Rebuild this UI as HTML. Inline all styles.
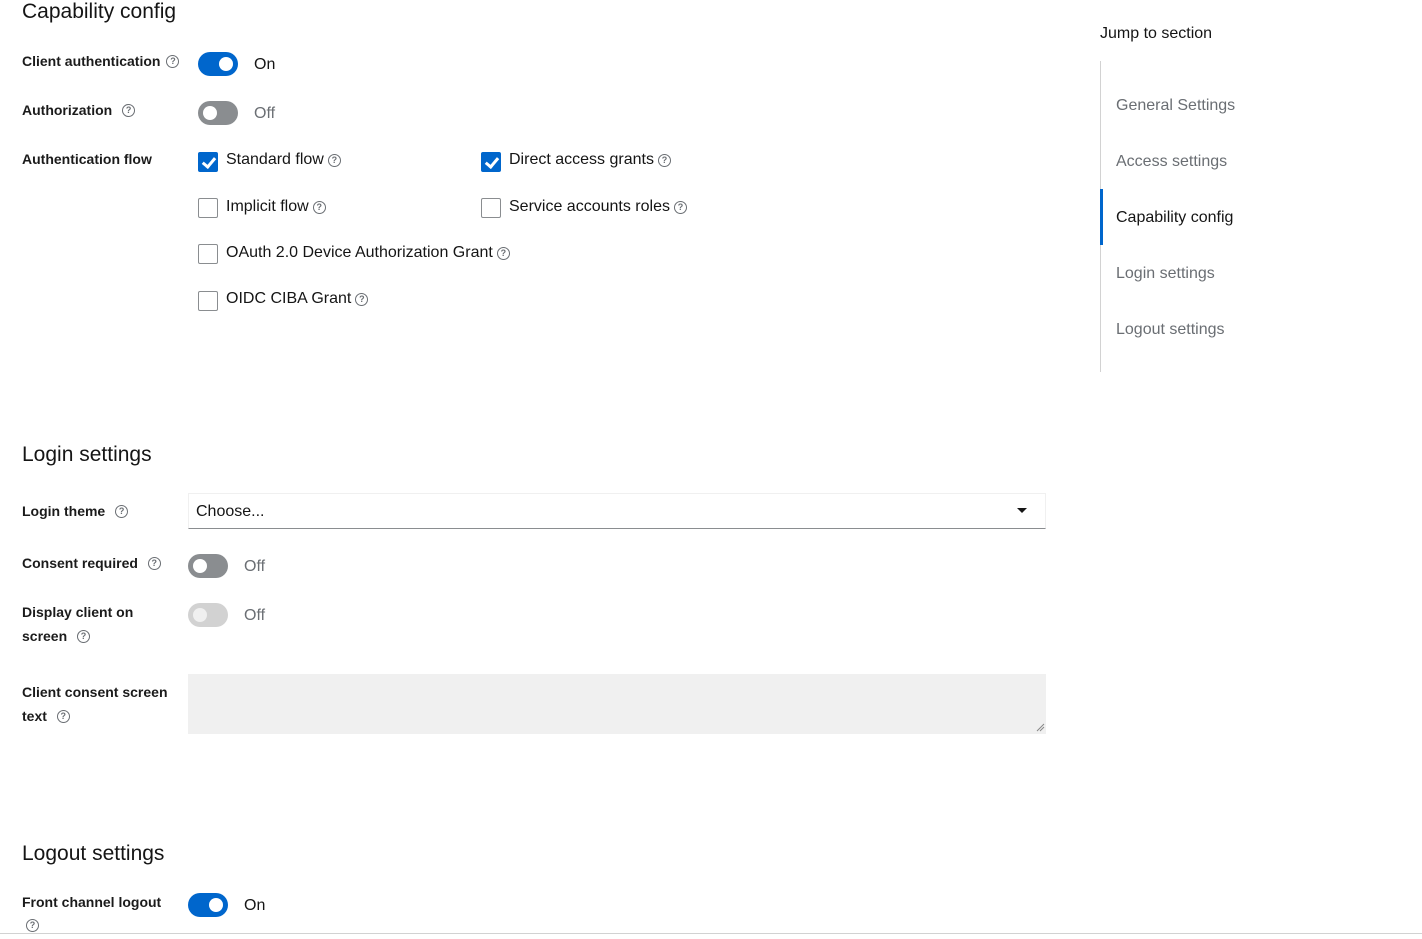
<!DOCTYPE html>
<html><head><meta charset="utf-8"><style>
*{margin:0;padding:0;box-sizing:border-box}
html,body{width:1422px;height:939px;overflow:hidden;background:#fff;font-family:"Liberation Sans",sans-serif;color:#151515}
.a{position:absolute;white-space:nowrap}
.h{font-size:21px;line-height:24px}
.l{font-size:14px;font-weight:bold;line-height:24px;color:#1b1b1b}
.t{font-size:16px;line-height:20px}
.g{color:#6a6e73}
.q{display:inline-block;width:13px;height:13px;border:1.3px solid #6a6e73;border-radius:50%;font-size:9px;font-weight:bold;line-height:10.5px;text-align:center;color:#6a6e73;vertical-align:middle;margin-left:6px;position:relative;top:-1px}
.t .q{margin-left:4px;top:1px}
.tg{position:absolute;width:40px;height:24px;border-radius:12px}
.tg i{position:absolute;top:5px;width:14px;height:14px;border-radius:50%;background:#fff}
.on{background:#0066cc}.on i{left:21px}
.off{background:#8a8d90}.off i{left:5px}
.dis{background:#d2d2d2}.dis i{left:5px;background:#f0f0f0}
.cb{position:absolute;width:20px;height:20px;border:1px solid #8a8d90;border-radius:2px;background:#fff}
.cb.c{background:#0066cc;border-color:#0066cc}
.cb.c:after{content:"";position:absolute;left:6px;top:2px;width:5px;height:10px;border:solid #fff;border-width:0 3px 3px 0;transform:rotate(40deg)}
.nav{font-size:16px;color:#6a6e73;line-height:20px}
</style></head><body>
<div class="a h" style="left:22px;top:0">Capability config</div>

<div class="a l" style="left:22px;top:49px">Client authentication<span class="q">?</span></div>
<div class="tg on" style="left:198px;top:52px"><i></i></div>
<div class="a t" style="left:254px;top:55px">On</div>

<div class="a l" style="left:22px;top:98px">Authorization <span class="q">?</span></div>
<div class="tg off" style="left:198px;top:101px"><i></i></div>
<div class="a t g" style="left:254px;top:104px">Off</div>

<div class="a l" style="left:22px;top:147px">Authentication flow</div>
<div class="cb c" style="left:198px;top:152px"></div>
<div class="a t" style="left:226px;top:150px">Standard flow<span class="q">?</span></div>
<div class="cb c" style="left:481px;top:152px"></div>
<div class="a t" style="left:509px;top:150px">Direct access grants<span class="q">?</span></div>
<div class="cb" style="left:198px;top:198px"></div>
<div class="a t" style="left:226px;top:197px">Implicit flow<span class="q">?</span></div>
<div class="cb" style="left:481px;top:198px"></div>
<div class="a t" style="left:509px;top:197px">Service accounts roles<span class="q">?</span></div>
<div class="cb" style="left:198px;top:244px"></div>
<div class="a t" style="left:226px;top:243px">OAuth 2.0 Device Authorization Grant<span class="q">?</span></div>
<div class="cb" style="left:198px;top:291px"></div>
<div class="a t" style="left:226px;top:289px">OIDC CIBA Grant<span class="q">?</span></div>

<div class="a h" style="left:22px;top:443px">Login settings</div>
<div class="a l" style="left:22px;top:499px">Login theme <span class="q">?</span></div>
<div class="a" style="left:188px;top:493px;width:858px;height:36px;border:1px solid #f0f0f0;border-bottom:1px solid #8a8d90"></div>
<div class="a t" style="left:196px;top:502px;color:#151515">Choose...</div>
<div class="a" style="left:1017px;top:508px;width:0;height:0;border-left:5px solid transparent;border-right:5px solid transparent;border-top:5px solid #151515"></div>

<div class="a l" style="left:22px;top:551px">Consent required <span class="q">?</span></div>
<div class="tg off" style="left:188px;top:554px"><i></i></div>
<div class="a t g" style="left:244px;top:557px">Off</div>

<div class="a l" style="left:22px;top:600px">Display client on</div>
<div class="a l" style="left:22px;top:624px">screen <span class="q">?</span></div>
<div class="tg dis" style="left:188px;top:603px"><i></i></div>
<div class="a t g" style="left:244px;top:606px">Off</div>

<div class="a l" style="left:22px;top:680px">Client consent screen</div>
<div class="a l" style="left:22px;top:704px">text <span class="q">?</span></div>
<div class="a" style="left:188px;top:674px;width:858px;height:60px;background:#f0f0f0"></div>
<svg class="a" style="left:1036px;top:723px" width="9" height="9"><path d="M1 8L8 1M4 8L8 4" stroke="#888" stroke-width="1"/></svg>

<div class="a h" style="left:22px;top:842px">Logout settings</div>
<div class="a l" style="left:22px;top:890px">Front channel logout</div>
<div class="a" style="left:26px;top:918px"><span class="q" style="margin:0">?</span></div>
<div class="tg on" style="left:188px;top:893px"><i></i></div>
<div class="a t" style="left:244px;top:896px">On</div>
<div class="a" style="left:0;top:933px;width:1422px;height:1px;background:#d2d2d2"></div>

<div class="a nav" style="left:1100px;top:24px;color:#151515">Jump to section</div>
<div class="a" style="left:1100px;top:61px;width:1px;height:311px;background:#d2d2d2"></div>
<div class="a" style="left:1100px;top:189px;width:3px;height:56px;background:#0066cc"></div>
<div class="a nav" style="left:1116px;top:96px">General Settings</div>
<div class="a nav" style="left:1116px;top:152px">Access settings</div>
<div class="a nav" style="left:1116px;top:208px;color:#151515">Capability config</div>
<div class="a nav" style="left:1116px;top:264px">Login settings</div>
<div class="a nav" style="left:1116px;top:320px">Logout settings</div>
</body></html>
